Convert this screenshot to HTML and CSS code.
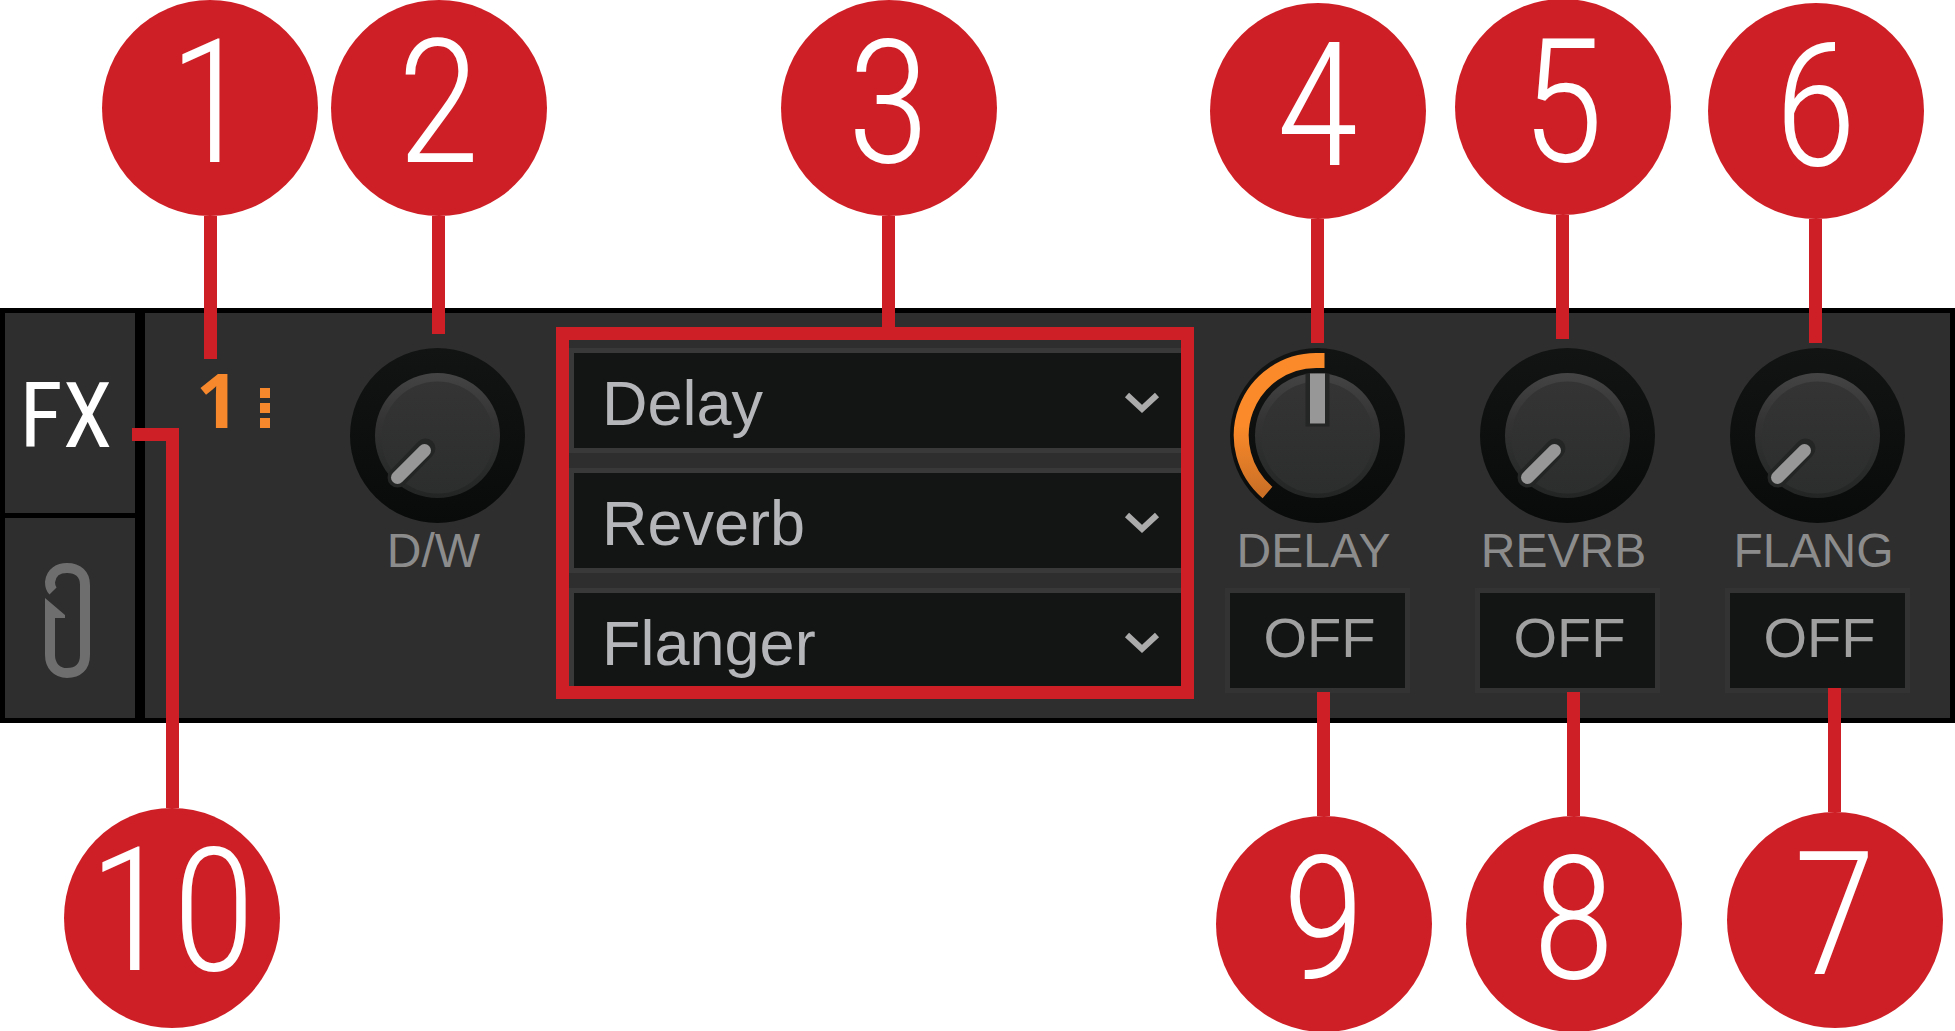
FILE: index.html
```html
<!DOCTYPE html>
<html lang="en">

<head>
	<meta charset="utf-8">
	<title>FX Unit Panel</title>
	<link rel="stylesheet" href="styles.css">
</head>

<body>
	<!-- shared knob artwork -->
	<svg class="defs" aria-hidden="true">
		<defs>
			<linearGradient id="ring" x1="0" y1="0" x2="0" y2="1">
				<stop offset="0" stop-color="#121413" />
				<stop offset="1" stop-color="#090a0a" />
			</linearGradient>
			<linearGradient id="cap" x1="0" y1="0" x2="0" y2="1">
				<stop offset="0" stop-color="#343434" />
				<stop offset="1" stop-color="#2c2d2d" />
			</linearGradient>
			<linearGradient id="rim" x1="0" y1="0" x2="0" y2="1">
				<stop offset="0" stop-color="#444" />
				<stop offset="0.4" stop-color="#333" />
				<stop offset="1" stop-color="#232525" />
			</linearGradient>
			<linearGradient id="amount" x1="0" y1="0" x2="0" y2="1">
				<stop offset="0.5" stop-color="#fa8a2a" />
				<stop offset="1" stop-color="#cc7026" />
			</linearGradient>
			<g id="knob">
				<circle r="87.5" fill="url(#ring)" />
				<circle r="62.5" fill="url(#rim)" />
				<circle cy="2" r="56" fill="url(#cap)" />
			</g>
			<g id="knob-min">
				<use href="#knob" />
				<path d="M-40 42L-12 13" stroke="#242525" stroke-width="20" stroke-linecap="round" />
				<path d="M-40 42L-13 15" stroke="#979797" stroke-width="13" stroke-linecap="round" />
			</g>
		</defs>
	</svg>

	<main class="stage">
		<section class="panel">
			<nav class="tabs">
				<button class="tab fx">FX</button>
				<button class="tab" aria-label="Pin">
					<svg width="60" height="120" viewBox="0 0 60 120" fill="none" stroke="#6e6e6e" stroke-width="10">
						<path d="M15 31C12 28 12 25 12 22C13 12 21 8 29 8C40 8 47 14 47 25V95C47 107 40 113 29 113C19 113 12 106 12 95V48" />
						<path d="M7 38L27 55V58H17V64H7z" fill="#6e6e6e" stroke="none" />
					</svg>
				</button>
				<div class="callout down ten">
					<span class="stem"></span>
					<span class="dot">10</span>
				</div>
			</nav>

			<div class="unit">
				<div class="lead">
					<div class="group">
						<strong>1</strong>
						<span class="marks"><i></i><i></i><i></i></span>
						<div class="callout up one">
							<span class="dot">1</span>
							<span class="stem"></span>
						</div>
					</div>
					<div class="control">
						<div class="dial">
							<svg viewBox="-87.5 -87.5 175 175"><use href="#knob-min" /></svg>
							<input id="drywet" type="range" min="0" max="100" value="0">
						</div>
						<label for="drywet">D/W</label>
						<div class="callout up two">
							<span class="dot">2</span>
							<span class="stem"></span>
						</div>
					</div>
				</div>

				<div class="effects">
					<div class="slot">
						<select aria-label="Effect 1">
							<option selected>Delay</option>
							<option>Reverb</option>
							<option>Flanger</option>
						</select>
						<svg width="36" height="22" viewBox="0 0 36 22"><path d="M3 3L18 17L33 3" /></svg>
					</div>
					<div class="slot">
						<select aria-label="Effect 2">
							<option>Delay</option>
							<option selected>Reverb</option>
							<option>Flanger</option>
						</select>
						<svg width="36" height="22" viewBox="0 0 36 22"><path d="M3 3L18 17L33 3" /></svg>
					</div>
					<div class="slot">
						<select aria-label="Effect 3">
							<option>Delay</option>
							<option>Reverb</option>
							<option selected>Flanger</option>
						</select>
						<svg width="36" height="22" viewBox="0 0 36 22"><path d="M3 3L18 17L33 3" /></svg>
					</div>
					<div class="frame"></div>
					<div class="callout up three">
						<span class="dot">3</span>
						<span class="stem"></span>
					</div>
				</div>

				<div class="knobs">
					<div class="control">
						<div class="dial">
							<svg viewBox="-87.5 -87.5 175 175">
								<use href="#knob" />
								<path d="M-50 57A75 75 0 0 1 -1 -75H7" fill="none" stroke="url(#amount)" stroke-width="15" />
								<path d="M0 -62V-9" stroke="#242525" stroke-width="24" />
								<path d="M0 -62V-12" stroke="#979797" stroke-width="15" />
							</svg>
							<input id="delay" type="range" min="0" max="100" value="50">
						</div>
						<label for="delay">DELAY</label>
						<button class="toggle" aria-pressed="false">OFF</button>
						<div class="callout up four">
							<span class="dot">4</span>
							<span class="stem"></span>
						</div>
						<div class="callout down nine">
							<span class="stem"></span>
							<span class="dot">9</span>
						</div>
					</div>
					<div class="control">
						<div class="dial">
							<svg viewBox="-87.5 -87.5 175 175"><use href="#knob-min" /></svg>
							<input id="reverb" type="range" min="0" max="100" value="0">
						</div>
						<label for="reverb">REVRB</label>
						<button class="toggle" aria-pressed="false">OFF</button>
						<div class="callout up five">
							<span class="dot">5</span>
							<span class="stem"></span>
						</div>
						<div class="callout down eight">
							<span class="stem"></span>
							<span class="dot">8</span>
						</div>
					</div>
					<div class="control">
						<div class="dial">
							<svg viewBox="-87.5 -87.5 175 175"><use href="#knob-min" /></svg>
							<input id="flanger" type="range" min="0" max="100" value="0">
						</div>
						<label for="flanger">FLANG</label>
						<button class="toggle" aria-pressed="false">OFF</button>
						<div class="callout up six">
							<span class="dot">6</span>
							<span class="stem"></span>
						</div>
						<div class="callout down seven">
							<span class="stem"></span>
							<span class="dot">7</span>
						</div>
					</div>
				</div>
			</div>
		</section>
	</main>
</body>

</html>
```
FILE: styles.css
```css
* {
	box-sizing: border-box;
}

:root {
	--red: #cf1f26;
	--orange: #f7882c;
	--panel: #2e2e2e;
	--field: #131514;
	--stem: 13px;
	--dot: 216px;
	--narrow: "Roboto Condensed", "Liberation Sans Narrow", sans-serif;
}

body {
	margin: 0;
	background: white;
	font-family: "Liberation Sans", Arial, sans-serif;
}

button,
select {
	font: inherit;
	margin: 0;
	padding: 0;
	border: none;
	border-radius: 0;
}

.defs {
	position: absolute;
	width: 0;
	height: 0;
}

/* room above and below the panel for the callouts */
.stage {
	padding: 308px 0;
}

.panel {
	display: flex;
	gap: 10px;
	padding: 5px;
	background: black;
}

.tabs {
	position: relative;
	display: grid;
	grid-template-rows: 1fr 1fr;
	gap: 5px;
	width: 130px;
	flex-shrink: 0;
}

.tab {
	display: flex;
	align-items: center;
	justify-content: center;
	padding: 4px 4px 0 0;
	background: var(--panel);
}

.fx {
	padding: 8px 8px 0 0;
	color: white;
	font-family: var(--narrow);
	font-size: 90px;
	line-height: 1;
}

.unit {
	flex: 1;
	display: grid;
	grid-template-columns: auto 1fr auto;
	gap: 39px;
	padding: 35px 40px 25px 55px;
	background: var(--panel);
}

.lead,
.knobs {
	display: flex;
	gap: 65px;
}

.group {
	position: relative;
	width: 80px;
	display: flex;
	align-items: flex-start;
	gap: 24px;
	margin-left: -4px;
	margin-right: 4px;
	padding-top: 20px;
	color: var(--orange);
}

.group strong {
	width: 40px;
	font: bold 76px/62px "Open Sans", sans-serif;
}

.marks {
	display: grid;
	gap: 5px;
	padding-top: 20px;
}

.marks i {
	width: 10px;
	height: 10px;
	background: var(--orange);
}

.control {
	position: relative;
	width: 185px;
	display: flex;
	flex-direction: column;
	align-items: center;
}

.dial {
	position: relative;
	width: 175px;
	height: 175px;
}

.dial svg {
	display: block;
	width: 100%;
	height: 100%;
}

.dial input {
	position: absolute;
	inset: 0;
	width: 100%;
	height: 100%;
	margin: 0;
	opacity: 0;
	cursor: pointer;
}

.control label {
	margin-bottom: 9px;
	padding-right: 8px;
	color: #8c8c8c;
	font-size: 48px;
	line-height: 56px;
}

.toggle {
	width: 100%;
	height: 105px;
	padding: 0 0 6px 4px;
	border: 5px solid #333;
	background: var(--field);
	color: #a0a0a0;
	font-size: 56px;
}

.effects {
	position: relative;
	display: grid;
	gap: 15px;
}

.slot {
	position: relative;
	height: 105px;
}

.slot select {
	appearance: none;
	width: 100%;
	height: 100%;
	padding: 4px 0 0 28px;
	border: 5px solid #393939;
	background: var(--field);
	color: #b5b6b9;
	font-size: 63px;
}

.slot svg {
	position: absolute;
	right: 26px;
	top: 44px;
	pointer-events: none;
	fill: none;
	stroke: #ababab;
	stroke-width: 6px;
}

.frame {
	position: absolute;
	inset: -21px -8px -6px -13px;
	border: 13px solid var(--red);
	pointer-events: none;
}

/* numbered callouts, each anchored to the part it points at */
.callout {
	position: absolute;
	left: 50%;
	width: var(--dot);
	margin-left: calc(var(--dot) / -2);
	display: flex;
	flex-direction: column;
	align-items: center;
	pointer-events: none;
}

.dot {
	width: var(--dot);
	height: var(--dot);
	border-radius: 50%;
	background: var(--red);
	color: white;
	font-family: var(--narrow);
	font-size: 172px;
	font-weight: 350;
	line-height: 206px;
	text-align: center;
}

.stem {
	width: var(--stem);
	height: 124px;
	background: var(--red);
}

.up {
	bottom: calc(100% + 5px);
}

.down {
	top: calc(100% - 1px);
}

.one {
	left: 14px;
	bottom: calc(100% - 11px);
}

.one .stem {
	height: 143px;
}

.two {
	left: calc(50% + 1px);
	bottom: calc(100% + 14px);
}

.two .stem {
	height: 118px;
}

.three {
	left: calc(50% + 11px);
	bottom: calc(100% + 21px);
}

.three .stem {
	height: 111px;
}

.five {
	left: calc(50% - 5px);
	bottom: calc(100% + 9px);
}

.six {
	left: calc(50% - 2px);
}

.eight,
.nine {
	left: calc(50% + 6px);
}

.seven {
	left: calc(50% + 17px);
	top: calc(100% - 5px);
}

.ten {
	left: calc(100% + 37px);
	top: 115px;
}

.ten .dot {
	height: 220px;
}

.ten .stem {
	width: 47px;
	height: 380px;
	margin-right: 34px;
	background: none;
	border-top: var(--stem) solid var(--red);
	border-right: var(--stem) solid var(--red);
}
```
